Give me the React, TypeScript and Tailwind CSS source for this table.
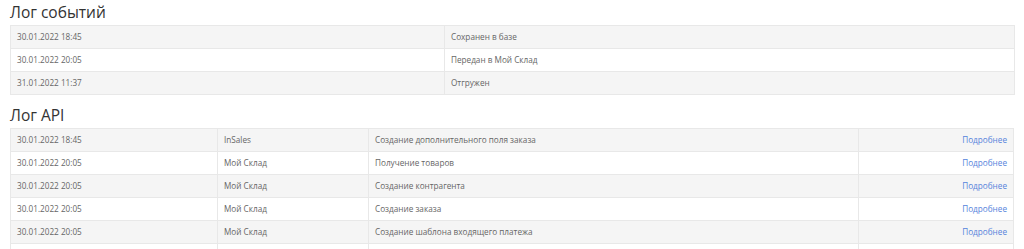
import React from 'react';

const events = [
  { date: '30.01.2022 18:45', status: 'Сохранен в базе' },
  { date: '30.01.2022 20:05', status: 'Передан в Мой Склад' },
  { date: '31.01.2022 11:37', status: 'Отгружен' },
];

const apiLog = [
  { date: '30.01.2022 18:45', system: 'InSales', action: 'Создание дополнительного поля заказа' },
  { date: '30.01.2022 20:05', system: 'Мой Склад', action: 'Получение товаров' },
  { date: '30.01.2022 20:05', system: 'Мой Склад', action: 'Создание контрагента' },
  { date: '30.01.2022 20:05', system: 'Мой Склад', action: 'Создание заказа' },
  { date: '30.01.2022 20:05', system: 'Мой Склад', action: 'Создание шаблона входящего платежа' },
  { date: '30.01.2022 20:05', system: 'Мой Склад', action: 'Создание входящего платежа' },
];

const cell = 'h-[23px] px-[6px] border border-[#e8e8e8] align-middle leading-[12px]';

const App: React.FC = () => {
  return (
    <div className="w-[1024px] h-[249px] overflow-hidden bg-white pl-[10px] pr-[9px] text-[#666] font-['Open_Sans',sans-serif]">
      <h2 className="h-[25px] pt-[2px] text-[15.5px] leading-[20px] text-[#333] font-normal">Лог событий</h2>
      <table className="w-full border-collapse table-fixed text-[8.2px]">
        <colgroup>
          <col className="w-[434px]" />
          <col />
        </colgroup>
        <tbody>
          {events.map((e, i) => (
            <tr key={i} className={i % 2 === 0 ? 'bg-[#f5f5f5]' : 'bg-white'}>
              <td className={cell}>{e.date}</td>
              <td className={cell}>{e.status}</td>
            </tr>
          ))}
        </tbody>
      </table>

      <h2 className="h-[33px] pt-[10px] text-[15.5px] leading-[20px] text-[#333] font-normal">Лог API</h2>
      <table className="w-[1004px] border-collapse table-fixed text-[8.2px]">
        <colgroup>
          <col className="w-[207px]" />
          <col className="w-[151px]" />
          <col className="w-[490px]" />
          <col />
        </colgroup>
        <tbody>
          {apiLog.map((r, i) => (
            <tr key={i} className={i % 2 === 0 ? 'bg-[#f5f5f5]' : 'bg-white'}>
              <td className={cell}>{r.date}</td>
              <td className={cell}>{r.system}</td>
              <td className={cell}>{r.action}</td>
              <td className={`${cell} text-right`}>
                <a href="#" className="text-[#5583dc]">Подробнее</a>
              </td>
            </tr>
          ))}
        </tbody>
      </table>
    </div>
  );
};

export default App;
